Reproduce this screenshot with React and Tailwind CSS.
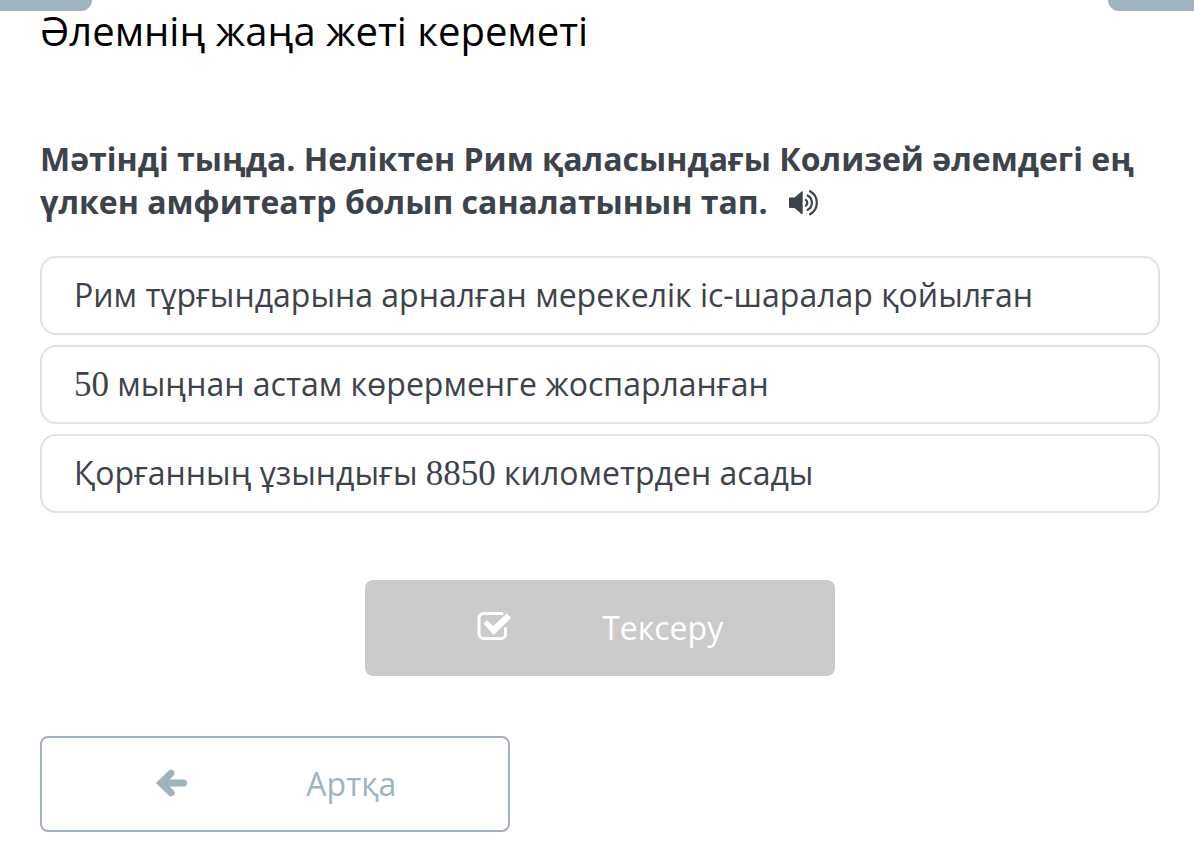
import { useState } from 'react';

const OPTIONS = [
  { id: 'events', parts: [{ text: 'Рим тұрғындарына арналған мерекелік іс-шаралар қойылған' }] },
  { id: 'seats', parts: [{ num: '50' }, { text: ' мыңнан астам көрерменге жоспарланған' }] },
  { id: 'wall', parts: [{ text: 'Қорғанның ұзындығы ' }, { num: '8850' }, { text: ' километрден асады' }] },
];

function SpeakerIcon() {
  return (
    <svg viewBox="0 0 32 28" className="w-8 h-7" fill="none" aria-hidden="true">
      <path d="M1 9.500a1 1 0 0 1 1-1h4.500l7-6a.7.7 0 0 1 1.200.5v21.400a.7.7 0 0 1-1.200.5l-7-6H2a1 1 0 0 1-1-1z" fill="currentColor" />
      <g stroke="currentColor" strokeWidth="2.200" strokeLinecap="round">
        <path d="M17.800 10.800a3.500 3.500 0 0 1 0 5.800" />
        <path d="M19.600 6.500a8.200 8.200 0 0 1 0 14.400" />
        <path d="M22 2.200a13.100 13.100 0 0 1 0 23" />
      </g>
    </svg>
  );
}

function CheckIcon() {
  return (
    <svg viewBox="0 0 34 34" className="w-[34px] h-[34px]" fill="none" aria-hidden="true">
      <path
        d="M25 2.500H6.500a4.500 4.500 0 0 0-4.500 4.500v16a4.500 4.500 0 0 0 4.500 4.500h17.500a4.500 4.500 0 0 0 4.500-4.500v-5.500"
        stroke="currentColor"
        strokeWidth="3"
        strokeLinecap="round"
      />
      <path
        d="M7 12.500l3-2.600 6.300 5.700L29.800 2.700l3.700 4.300L16.700 23.500z"
        fill="currentColor"
        stroke="currentColor"
        strokeWidth="1"
        strokeLinejoin="round"
      />
    </svg>
  );
}

function ArrowLeftIcon() {
  return (
    <svg viewBox="0 0 34 32" className="w-[34px] h-8" fill="none" aria-hidden="true">
      <path
        d="M17 5.300L7 15l10 9.700M7 15h22.500"
        stroke="currentColor"
        strokeWidth="7"
        strokeLinecap="round"
      />
    </svg>
  );
}

export default function App() {
  const [selected, setSelected] = useState(null);

  return (
    <div className="min-h-screen bg-white font-['Open_Sans','Noto_Sans',sans-serif] text-[#3d434b]">
      {/* Bottom edges of the side tabs */}
      <div className="flex justify-between">
        <div className="w-[92px] h-[11px] rounded-br-xl bg-[#9fb3bf]" />
        <div className="w-[86px] h-[11px] rounded-bl-xl bg-[#9fb3bf]" />
      </div>

      <main className="pl-10 pr-[34px] pb-7">
        <h1 className="text-[40px] leading-[40px] text-black">Әлемнің жаңа жеті кереметі</h1>

        <h2 className="mt-[86px] text-[32px] leading-[43px] font-bold">
          Мәтінді тыңда. Неліктен Рим қаласындағы Колизей әлемдегі ең үлкен амфитеатр болып
          саналатынын тап.
          <button type="button" aria-label="Тыңдау" className="ml-5 align-[-3px]">
            <SpeakerIcon />
          </button>
        </h2>

        <div className="mt-[33px] flex flex-col gap-2.5">
          {OPTIONS.map(o => (
            <button
              key={o.id}
              type="button"
              aria-pressed={selected === o.id}
              onClick={() => setSelected(o.id)}
              className="w-full rounded-2xl border-2 border-[#e1e1e1] px-8 pt-[15px] pb-[17px] text-left text-[32px] leading-[43px]"
            >
              {o.parts.map((p, i) =>
                p.num
                  ? <span key={i} className="font-['Liberation_Serif',serif] text-[35px] leading-none">{p.num}</span>
                  : <span key={i}>{p.text}</span>
              )}
            </button>
          ))}
        </div>

        <div className="mt-[67px] flex justify-center">
          <button
            type="button"
            className="flex w-[42%] items-center justify-between rounded-lg bg-[#cbcbcb] px-28 py-6 text-[32px] leading-[48px] text-white"
          >
            <CheckIcon />
            Тексеру
          </button>
        </div>

        <button
          type="button"
          className="mt-[60px] flex w-[42%] items-center justify-between rounded-lg border-2 border-[#9fb3bf] px-28 py-[22px] text-[32px] leading-[48px] text-[#9fb3bf]"
        >
          <ArrowLeftIcon />
          Артқа
        </button>
      </main>
    </div>
  );
}
